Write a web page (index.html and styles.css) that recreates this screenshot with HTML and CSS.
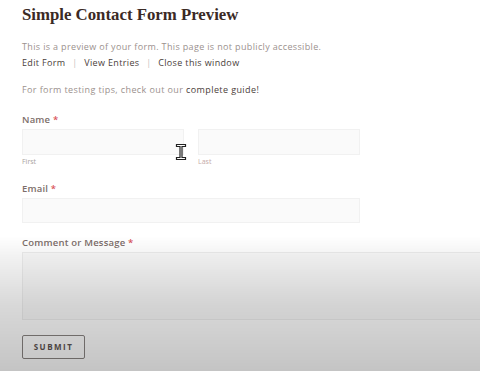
FILE: index.html
```html
<!DOCTYPE html>
<html>
<head>
    <title>Simple Contact Form Preview</title>
    <link rel="stylesheet" href="styles.css">
</head>
<body>

<div class="page">
    <h1 class="title">Simple Contact Form Preview</h1>

    <p class="notice">This is a preview of your form. This page is not publicly accessible.</p>
    <div class="links">
        <a href="#">Edit Form</a>
        <span class="sep">|</span>
        <a href="#">View Entries</a>
        <span class="sep">|</span>
        <a href="#">Close this window</a>
    </div>

    <p class="tips">For form testing tips, check out our <a href="#">complete guide!</a></p>

    <form class="form">
        <div class="field">
            <label class="label">Name <span class="req">*</span></label>
            <div class="name-row">
                <div class="sub">
                    <input type="text" class="input">
                    <span class="sublabel">First</span>
                </div>
                <div class="sub">
                    <input type="text" class="input">
                    <span class="sublabel last">Last</span>
                </div>
            </div>
        </div>

        <div class="field">
            <label class="label">Email <span class="req">*</span></label>
            <input type="text" class="input wide">
        </div>

        <div class="field">
            <label class="label">Comment or Message <span class="req">*</span></label>
            <textarea class="textarea"></textarea>
        </div>

        <button type="button" class="submit-btn">Submit</button>
    </form>
</div>

<!-- mouse cursor over the name row -->
<svg class="cursor" width="12" height="18" viewBox="0 0 12 18">
    <path d="M1.5 1.5 H10.5 V3.5 H7 V14.5 H10.5 V16.5 H1.5 V14.5 H5 V3.5 H1.5 Z" fill="#fff" stroke="#222" stroke-width="1.2"/>
</svg>

<div class="shade"></div>

</body>
</html>
```

FILE: styles.css
```css
body {
    margin: 0;
    padding: 0;
    background: #ffffff;
    font-family: "Open Sans", Arial, sans-serif;
    overflow: hidden;
}
.page {
    padding: 4px 0 0 22px;
}
.title {
    margin: 0;
    font-family: "Liberation Serif", "Times New Roman", serif;
    font-size: 16.8px;
    font-weight: bold;
    color: #3b2a25;
    line-height: 22px;
}
.notice {
    margin: 14px 0 0;
    font-size: 9px;
    line-height: 14px;
    letter-spacing: 0.35px;
    color: #9b918e;
}
.links {
    margin-top: 2px;
    font-size: 9px;
    line-height: 14px;
    letter-spacing: 0.35px;
    color: #4a3e3a;
}
.links a {
    color: #4a3e3a;
    text-decoration: none;
}
.links .sep {
    color: #c9c2c0;
    margin: 0 4px;
}
.tips {
    margin: 13px 0 0;
    font-size: 9px;
    line-height: 14px;
    letter-spacing: 0.4px;
    color: #9b918e;
}
.tips a {
    color: #4a3e3a;
    text-decoration: none;
}
.form {
    margin-top: 16px;
}
.field {
    margin-bottom: 13px;
}
.label {
    display: block;
    font-size: 9.5px;
    font-weight: 600;
    line-height: 14px;
    letter-spacing: 0.2px;
    color: #7d6e6a;
    margin-bottom: 2px;
}
.req {
    color: #d9555a;
}
.name-row {
    display: flex;
    gap: 14px;
}
.sub {
    display: flex;
    flex-direction: column;
}
.input {
    box-sizing: border-box;
    width: 162px;
    height: 26px;
    margin: 0;
    background: #fafafa;
    border: 1px solid #f1f1f1;
    outline: none;
}
.input.wide {
    width: 338px;
    height: 25px;
}
.sublabel {
    font-size: 7px;
    line-height: 14px;
    color: #aaa3a1;
}
.sublabel.last {
    color: #c6aaa8;
}
.textarea {
    display: block;
    box-sizing: border-box;
    width: 480px;
    height: 68px;
    margin: 0;
    background: #fafafa;
    border: 1px solid #eeeeee;
    resize: none;
    outline: none;
}
.submit-btn {
    box-sizing: border-box;
    width: 63px;
    height: 24px;
    background: transparent;
    border: 1.5px solid #8a8583;
    border-radius: 2px;
    font-family: "Open Sans", Arial, sans-serif;
    font-size: 8px;
    font-weight: 700;
    letter-spacing: 1.5px;
    text-transform: uppercase;
    color: #5e5553;
    cursor: pointer;
}
.cursor {
    position: absolute;
    left: 175px;
    top: 143px;
}
.shade {
    position: fixed;
    left: 0;
    right: 0;
    top: 236px;
    bottom: 0;
    pointer-events: none;
    background: linear-gradient(to bottom, rgba(0,0,0,0) 0%, rgba(0,0,0,0.05) 15%, rgba(0,0,0,0.15) 50%, rgba(0,0,0,0.23) 100%);
}
```
